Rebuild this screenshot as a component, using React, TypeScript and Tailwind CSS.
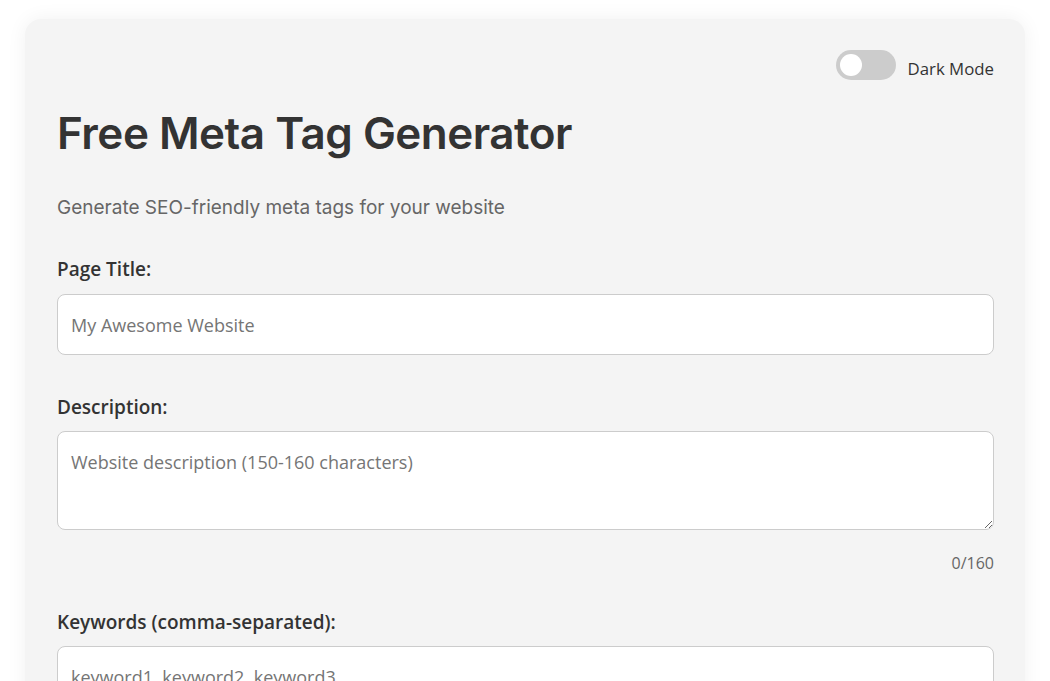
import React, { useState } from "react";

const ui = { fontFamily: '"Open Sans", "Noto Sans", sans-serif' };
const head = { fontFamily: 'Inter, "Noto Sans", sans-serif' };

export default function App() {
  const [dark, setDark] = useState(false);
  const [desc, setDesc] = useState("");
  return (
    <div className="min-h-screen bg-white pt-[19px]" style={ui}>
      <div className="mx-auto w-[1000px] rounded-[16px] bg-[#f4f4f4] pl-[32px] pr-[31px] pt-[31px] pb-[40px] shadow-[0_0_20px_rgba(0,0,0,0.06)]">
        <div className="flex h-[30px] items-center justify-end gap-[12px]">
          <button
            onClick={() => setDark(!dark)}
            className="relative h-[30px] w-[60px] rounded-full bg-[#cccccc]"
          >
            <span className="absolute left-[4px] top-[4px] h-[22px] w-[22px] rounded-full bg-white" />
          </button>
          <span className="translate-y-[4px] text-[16.8px] leading-[24px] text-[#333333]">Dark Mode</span>
        </div>
        <h1
          className="mt-[26px] text-[44px] leading-[54px] font-semibold tracking-[-0.5px] text-[#333333]"
          style={head}
        >
          Free Meta Tag Generator
        </h1>
        <p
          className="mt-[34px] text-[19px] leading-[28px] text-[#666666]"
          style={head}
        >
          Generate SEO-friendly meta tags for your website
        </p>
        <label className="mt-[35px] block text-[19px] leading-[24px] font-semibold text-[#333333]">
          Page Title:
        </label>
        <input
          type="text"
          placeholder="My Awesome Website"
          className="mt-[13px] block h-[61px] w-full rounded-[8px] border border-[#cccccc] bg-white px-[13px] text-[18px] text-[#333333] outline-none placeholder:text-[#757575]"
        />
        <label className="mt-[40px] block text-[19px] leading-[24px] font-semibold text-[#333333]">
          Description:
        </label>
        <textarea
          placeholder="Website description (150-160 characters)"
          value={desc}
          onChange={(e) => setDesc(e.target.value)}
          className="mt-[12px] block h-[99px] w-full rounded-[8px] border border-[#cccccc] bg-white px-[13px] py-[18px] text-[18px] leading-[24px] text-[#333333] outline-none placeholder:text-[#757575]"
        />
        <div className="mt-[21px] text-right text-[16px] leading-[24px] text-[#666666]">
          {desc.length}/160
        </div>
        <label className="mt-[35px] block text-[19px] leading-[24px] font-semibold text-[#333333]">
          Keywords (comma-separated):
        </label>
        <input
          type="text"
          placeholder="keyword1, keyword2, keyword3"
          className="mt-[12px] block h-[61px] w-full rounded-[8px] border border-[#cccccc] bg-white px-[13px] text-[18px] text-[#333333] outline-none placeholder:text-[#757575]"
        />
      </div>
    </div>
  );
}
